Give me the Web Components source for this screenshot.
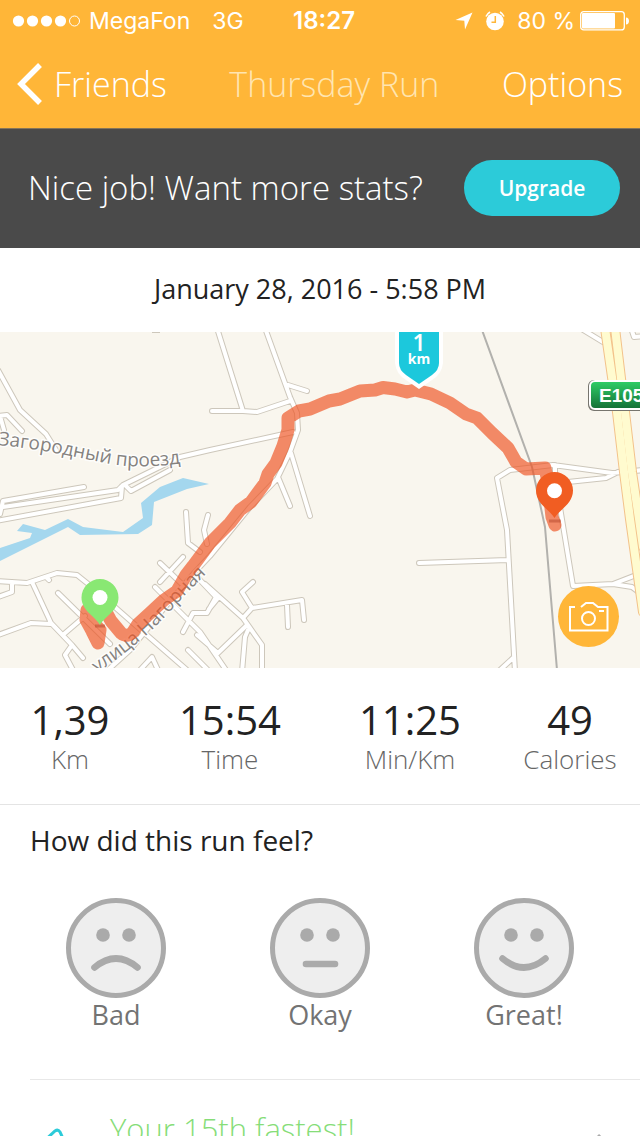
<!DOCTYPE html>
<html lang="en">
<head>
<meta charset="utf-8">
<meta name="viewport" content="width=device-width, initial-scale=1">
<title>Thursday Run</title>
<style>
  body { margin: 0; background: #fff; color: #222; font-family: "Open Sans", "Noto Sans", sans-serif; }
</style>
</head>
<body>
<run-screen>
  <status-bar slot="top" carrier="MegaFon" network="3G" time="18:27" battery="80 %"></status-bar>
  <nav-bar slot="top" back="Friends" action="Options">Thursday Run</nav-bar>
  <upgrade-banner>Nice job! Want more stats?</upgrade-banner>
  <run-date>January 28, 2016 - 5:58 PM</run-date>
  <run-map></run-map>
  <stat-row>
    <stat-item label="Km">1,39</stat-item>
    <stat-item label="Time">15:54</stat-item>
    <stat-item label="Min/Km">11:25</stat-item>
    <stat-item label="Calories">49</stat-item>
  </stat-row>
  <feel-picker>How did this run feel?</feel-picker>
  <insight-row>Your 15th fastest!</insight-row>
</run-screen>

<script>
const define = (name, html) => customElements.define(name, class extends HTMLElement {
  constructor() {
    super();
    this.attachShadow({ mode: "open" }).innerHTML = html;
  }
  connectedCallback() {
    this.shadowRoot.querySelectorAll("[data-attr]").forEach(el => {
      el.textContent = this.getAttribute(el.dataset.attr);
    });
  }
});

define("run-screen", `
<style>
  :host { display: flex; flex-direction: column; height: 100vh; overflow: hidden; }
  header { flex: none; background: #ffb638; color: #fff; }
  main { flex: 1; min-height: 0; overflow-y: auto; scrollbar-width: none; }
</style>
<header><slot name="top"></slot></header>
<main><slot></slot></main>`);

define("status-bar", `
<style>
  :host { display: grid; grid-template-columns: 40fr auto 39fr; align-items: center; height: 42px; padding: 0 11px 0 12px; font: 400 23px/28px Inter, sans-serif; }
  .left, .right { display: flex; align-items: center; }
  .left { gap: 7px; }
  .net { margin-left: 15px; }
  .right { justify-content: flex-end; gap: 12px; }
  .power { display: flex; align-items: center; gap: 5px; }
  b { font-size: 24px; font-weight: 600; }
  svg { display: block; }
</style>
<div class="left">
  <svg width="70" height="12" viewBox="0 0 70 12" fill="#fff"><circle cx="6.5" cy="6" r="5.6"/><circle cx="20.5" cy="6" r="5.6"/><circle cx="34.5" cy="6" r="5.6"/><circle cx="48.5" cy="6" r="5.6"/><circle cx="62.5" cy="6" r="5" fill="none" stroke="#fff"/></svg>
  <span data-attr="carrier"></span><span class="net" data-attr="network"></span>
</div>
<b data-attr="time"></b>
<div class="right">
  <svg width="18" height="18" viewBox="0 0 18 18" fill="#fff"><path d="M17.500 .5 10 17.500 9.300 8.700 .5 8z"/></svg>
  <svg width="20" height="20" viewBox="0 0 20 20"><circle cx="10" cy="10.500" r="8.800" fill="#fff"/><path d="M1 5.500A11 11 0 0 1 5 1M15 1a11 11 0 0 1 4 4.500" fill="none" stroke="#fff" stroke-width="1.600"/><path d="M10.300 5v6.200H6.500" fill="none" stroke="#ffb638" stroke-width="1.500"/></svg>
  <span class="power"><span data-attr="battery"></span>
  <svg width="49" height="20" viewBox="0 0 49 20"><rect x=".7" y=".7" width="43.600" height="18.200" rx="3" fill="none" stroke="#fff" stroke-width="1.300"/><rect x="2" y="2" width="33" height="15.600" rx="1" fill="#fff"/><path d="M46 6.500c4 0 4 7 0 7z" fill="#fff"/></svg></span>
</div>`);

define("nav-bar", `
<style>
  :host { display: flex; justify-content: space-between; align-items: center; height: 84px; padding: 0 17px 2px; font-size: 34px; line-height: 48px; font-weight: 300; }
  h1 { margin: 0; font: inherit; color: #ffe5b0; }
  a, button { color: #fff; font: inherit; text-decoration: none; }
  a { display: flex; align-items: center; gap: 11px; }
  button { padding: 0; border: 0; background: none; }
</style>
<a href="#friends"><svg width="26" height="42" viewBox="0 0 26 42"><path d="M23 2 4 21l19 19" fill="none" stroke="#fff" stroke-width="5.500"/></svg><span data-attr="back"></span></a>
<h1><slot></slot></h1>
<button type="button" data-attr="action"></button>`);

define("upgrade-banner", `
<style>
  :host { display: flex; align-items: center; justify-content: space-between; height: 120px; padding: 0 20px 0 28px; background: #4a4a4a; box-shadow: inset 0 1px #85755a; color: #fff; }
  p { margin: 0; font-size: 33px; line-height: 40px; font-weight: 300; }
  button { width: 156px; height: 56px; padding: 0; border: 0; border-radius: 28px; background: #2ccbd9; color: #fff; font: 600 21px/28px "Open Sans", sans-serif; }
</style>
<p><slot></slot></p><button type="button">Upgrade</button>`);

define("run-date", `
<style>
  :host { display: flex; align-items: center; justify-content: center; height: 84px; font-size: 27px; line-height: 34px; }
  time { padding-bottom: 2px; }
</style>
<time datetime="2016-01-28T17:58"><slot></slot></time>`);

define("run-map", `
<style>
  :host { display: block; position: relative; height: 336px; background: #f9f6ee; }
  .map { display: block; width: 100%; height: 100%; }
  button { position: absolute; right: 21px; bottom: 21px; width: 61px; height: 61px; padding: 0; border: 0; border-radius: 50%; background: #ffb638; }
  button svg { display: block; }
</style>
<svg class="map" viewBox="0 0 640 336" preserveAspectRatio="xMidYMid slice" role="img" aria-label="Route map">
  <defs>
    <linearGradient id="sign" x2="0" y2="1"><stop stop-color="#2fd068"/><stop offset="1" stop-color="#146f36"/></linearGradient>
    <path id="roads" d="M-2 38 20 78 46 102 56 118M-2 84 7 83 22 99M0 84 4 98M212 79 243 79 257 80 290 69M217-4 243 79M265-4 290 65 297 81 298 98 290 120 277 147 250 175 210 224 195 240 165 275 130 318 108 338M288 53 307 59M293 100 210 118 180 125 123 153 118 158 3 175M84 155 3 169 0 182M-4 189 121 166 122 154M125 153 131 159 170 138M291 121 310 184M278 145 290 174M186 180 188 211 200 220M208 183 204 198 207 212M183 225 160 250M160 231 184 254M-4 249 27 251 57 241 77 243 92 255 133 291 187 338M12 250 12 260-2 265M46 245 49 248M32 250 51 291 72 313 83 326M-2 303 31 291 51 292M58 261 110 312M85 284 64 302M72 313 65 323 73 338M155 255 200 300 226 338M197 245 216 265 207 281 193 281 183 300M205 252 243 286 262 313 262 340M218 266 209 277M253 250 242 260 252 276 302 268 304 288M287 273 288 295M252 276 243 286M247 293 218 321 197 303M248 298 245 305 242 340M140 338 152 325 158 338M188 318 208 338M419 231 508 228M515 340 507 198 497 146 510 138 553 133 612 141 644 138M500 338 513 326M568 150 606 146 618 140M555 133 555 145 573 254 613 252 644 240M613 252 632 255 644 264M580-4 603 10M631-4 634 5 644 4"/>
    <path id="hw1" d="M605-4 617 80 624 140 630 187 643 280"/>
    <path id="hw2" d="M615-4 625 80 632 140 639 187 643 215"/>
    <path id="lane" d="M-2 113C40 117 70 124 100 130S150 136 190 130"/>
    <path id="street" d="M97 341C142 311 160 290 175 274S200 248 224 224"/>
  </defs>
  <rect width="640" height="336" fill="#f9f6ee"/>
  <path d="M23 192 45 198 68 187 83 195 123 200 143 186 141 171 160 155 183 146 209 152 187 157 154 170 152 193 138 202 80 203 68 195 0 229V216L30 206 32 201 17 199z" fill="#a4d7ee"/>
  <g fill="none" stroke-linejoin="round" stroke-linecap="round">
    <use href="#roads" stroke="#cdc7bb" stroke-width="6"/>
    <use href="#roads" stroke="#fff" stroke-width="4"/>
    <g stroke="#f3c28a" stroke-width="10"><use href="#hw1"/><use href="#hw2"/></g>
    <g stroke="#fffbcf" stroke-width="8"><use href="#hw1"/><use href="#hw2"/></g>
    <path d="M482-2 532 135 545 195 557 338" stroke="#b2b1ad" stroke-width="2"/>
  </g>
  <path d="M152 0h8" stroke="#cdc7bb" stroke-width="2"/>
  <g font-family="Open Sans, sans-serif" font-size="19" fill="#85827f" stroke="#fff" stroke-opacity=".8" stroke-width="3" stroke-linejoin="round" paint-order="stroke">
    <text><textPath href="#lane">Загородный проезд</textPath></text>
    <text><textPath href="#street">улица Нагорная</textPath></text>
  </g>
  <g fill="none" stroke="#ee5322" stroke-opacity=".67" stroke-width="13" stroke-linecap="round" stroke-linejoin="round">
    <path d="M87 278 86 288 92 299 98 311 100 298 88 285M104 276 111 289 121 301Q127 306 133 300L138 292 150 281 164 268 177 259 186 243 193 234 210 211 230 191 240 178 251 170 265 151 268 142 276 131 283 114 288 98 288 86 299 79 310 77 329 69 340 67 360 59 375 58 383 55.500 395 57 407 60 415 58 431 62 450 71 466 82 477 86 492 101 508 116 516 130 526 137 545 136 548 150 552 185 555 193"/>
  </g>
  <path d="M395-4V31Q396 42 406 48L419 57 432 48Q442 42 443 31V-4z" fill="#fff"/>
  <path d="M399-4V31Q399 38 406 43L419 52 432 43Q439 38 439 31V-4z" fill="#1cc8dc"/>
  <g fill="#fff" font-family="Open Sans, sans-serif" text-anchor="middle"><text x="419" y="19" font-size="23" font-weight="600">1</text><text x="419" y="32" font-size="14" font-weight="700">km</text></g>
  <path d="M95 294h10M549 189h12" stroke="#b3452a" stroke-opacity=".5" stroke-width="3"/>
  <path d="M100 293C96 285 81.500 279 81.500 265.500A18.500 18.500 0 0 1 118.500 265.500C118.500 279 104 285 100 293z" fill="#89e873"/><circle cx="100" cy="265.500" r="7.500" fill="#fff"/>
  <path d="M554.500 186C550 178 536 172 536 158.500A18.500 18.500 0 0 1 573 158.500C573 172 559 178 554.500 186z" fill="#f15d22"/><circle cx="554.500" cy="158.700" r="7.500" fill="#fff"/>
  <rect x="588" y="48" width="72" height="31" rx="6" fill="#77756e"/>
  <rect x="590" y="49" width="70" height="28" rx="5" fill="url(#sign)" stroke="#fff" stroke-width="2"/>
  <text x="599" y="70" font-family="Liberation Sans, sans-serif" font-weight="700" font-size="19" fill="#fff">E105</text>
</svg>
<button type="button" aria-label="Add photo"><svg width="61" height="61" viewBox="0 0 61 61" fill="none" stroke="#fff" stroke-width="2"><path d="M17 21H12V44.500H49.500V21H40L35 17H28L23 21M41 25h5"/><circle cx="30.500" cy="32.500" r="6.500"/></svg></button>`);

define("stat-row", `
<style>
  :host { display: grid; grid-template-columns: 7fr 9fr 9fr 7fr; height: 136px; border-bottom: 1px solid #e4e4e4; }
</style><slot></slot>`);

define("stat-item", `
<style>
  :host { display: flex; flex-direction: column; align-items: center; padding-top: 28px; }
  strong { font-size: 40px; line-height: 48px; font-weight: 400; }
  span { font-size: 26px; line-height: 30px; font-weight: 300; color: #666; }
</style>
<strong><slot></slot></strong><span data-attr="label"></span>`);

const face = (id, label, mouth) => `
<label for="${id}"><input type="radio" name="feel" id="${id}">
<svg width="100" height="100" viewBox="0 0 100 100"><circle cx="50" cy="50" r="47.500" fill="#eee" stroke="#aaa" stroke-width="5"/><circle cx="37" cy="37" r="6.800" fill="#aaa"/><circle cx="63" cy="37" r="6.800" fill="#aaa"/><path d="${mouth}" fill="none" stroke="#aaa" stroke-width="6.600" stroke-linecap="round"/></svg>
<span>${label}</span></label>`;

define("feel-picker", `
<style>
  :host { display: block; height: 274px; }
  fieldset { margin: 0; padding: 0; border: 0; min-width: 0; }
  legend { padding: 19px 30px 0; font-size: 28px; line-height: 32px; }
  div { display: grid; grid-template-columns: repeat(3, 1fr); padding: 42px 14px 0; }
  label { display: flex; flex-direction: column; align-items: center; position: relative; font-size: 27px; line-height: 34px; color: #737373; }
  input { position: absolute; opacity: 0; margin: 0; }
  svg { display: block; }
</style>
<fieldset><legend><slot></slot></legend>
<div>${face("bad", "Bad", "M28.500 69.500Q50 51.500 71.500 69.500")}${face("okay", "Okay", "M36 66H65")}${face("great", "Great!", "M28.500 60.500Q50 78.500 71.500 60.500")}</div></fieldset>`);

define("insight-row", `
<style>
  :host { display: block; padding-left: 30px; }
  a { display: grid; grid-template-columns: 52px 1fr auto; column-gap: 28px; border-top: 1px solid #e8e8e8; padding: 25px 30px 26px 0; color: #86dd78; font-size: 31px; line-height: 48px; font-weight: 300; text-decoration: none; }
  svg { display: block; margin-top: 22px; }
</style>
<a href="#insight"><svg width="52" height="52" viewBox="0 0 52 52" fill="none" stroke="#2ccbd9" stroke-width="3"><path d="M12 16 25 4Q28 2 30 5L46 40H8z"/></svg><span><slot></slot></span><svg width="14" height="26" viewBox="0 0 14 26" fill="none" stroke="#aaa" stroke-width="3"><path d="M2 8l8 8L2 24"/></svg></a>`);
</script>
</body>
</html>
